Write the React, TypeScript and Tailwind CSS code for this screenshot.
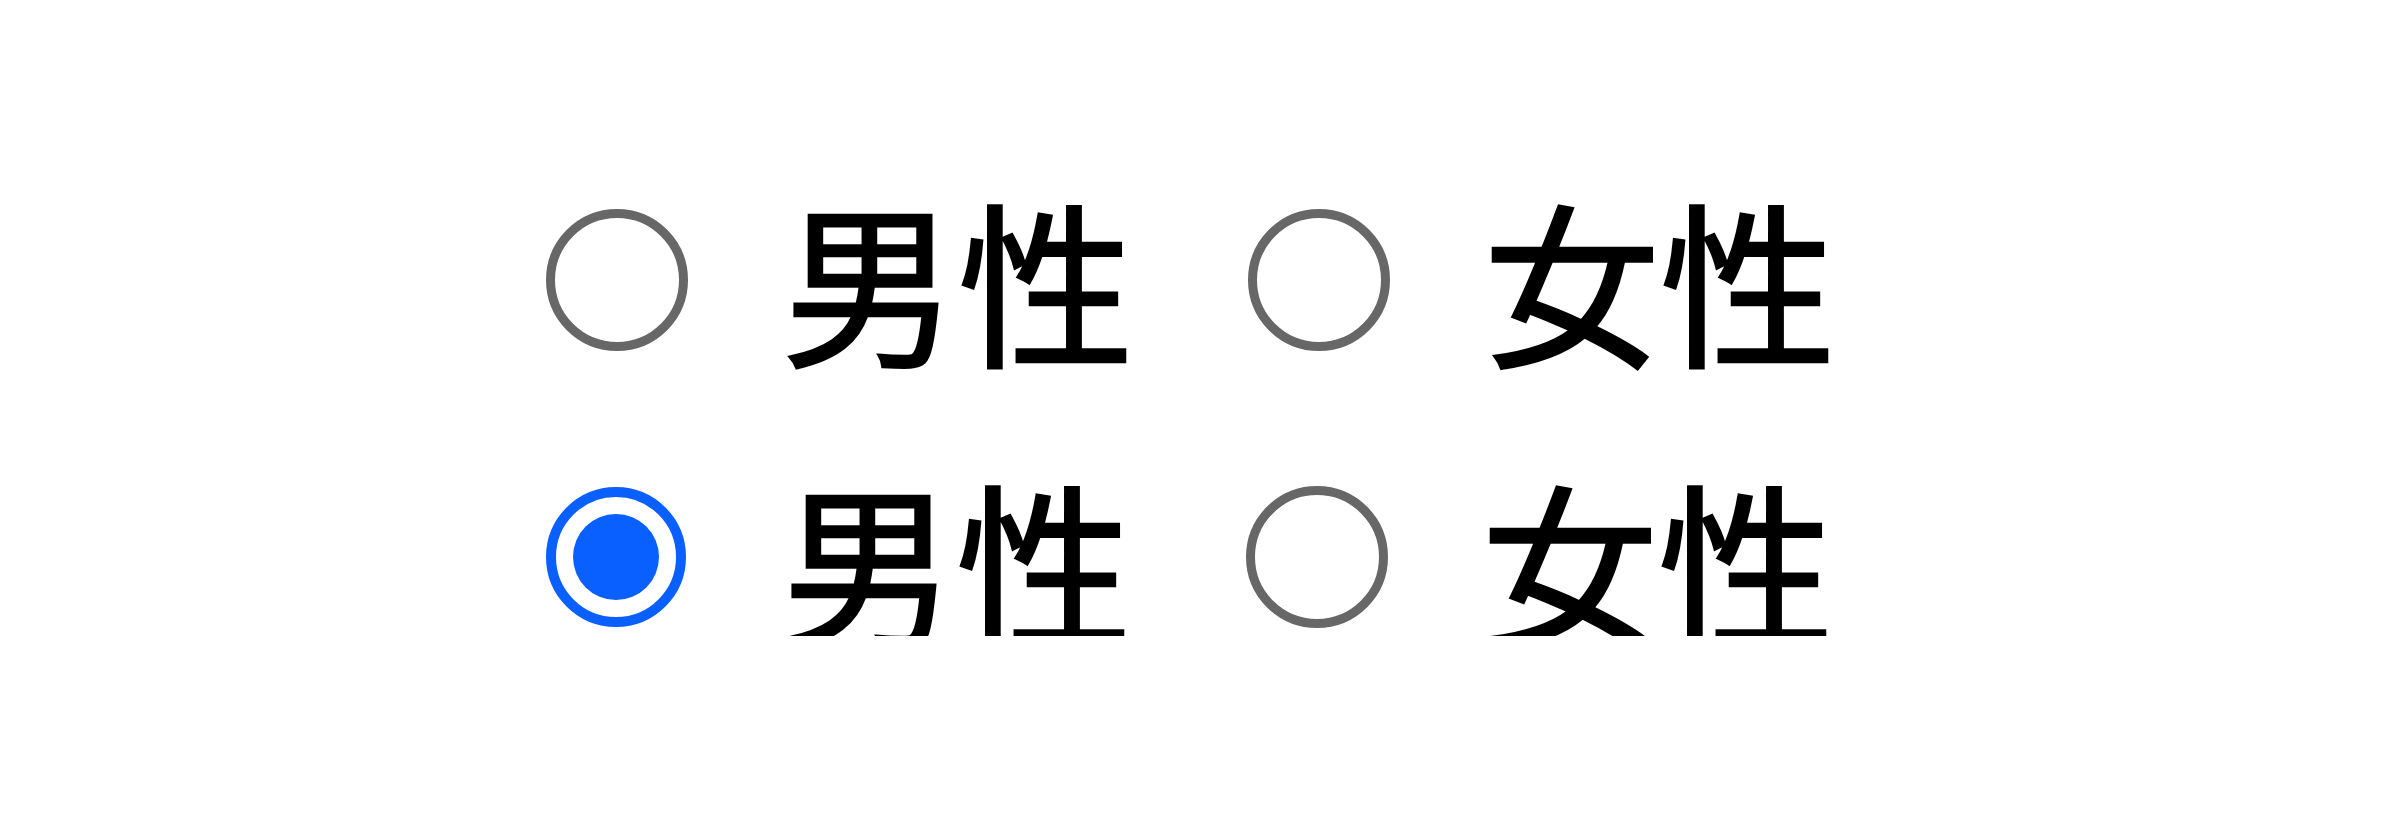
import { useState } from "react";

type Gender = "male" | "female";

const OPTIONS: { value: Gender; label: string }[] = [
  { value: "male", label: "男性" },
  { value: "female", label: "女性" },
];

const FONT = {
  fontFamily: '"Noto Sans CJK JP", "Noto Sans CJK SC", sans-serif',
};

function RadioDot({ checked }: { checked: boolean }) {
  if (checked) {
    return (
      <span className="flex h-[140px] w-[140px] shrink-0 items-center justify-center rounded-full border-[10px] border-[#0a5fff]">
        <span className="h-[86px] w-[86px] rounded-full bg-[#0a5fff]" />
      </span>
    );
  }
  return (
    <span className="h-[142px] w-[142px] shrink-0 rounded-full border-[9px] border-[#676767]" />
  );
}

const labelText =
  "block text-[176px] leading-none text-black [-webkit-text-stroke:2.5px_#000]";

/**
 * One row of the gender picker. `cropped` trims the label box so the
 * glyphs are cut top and bottom, as in the second sample row.
 */
function GenderRow({
  selected,
  cropped,
  onSelect,
}: {
  selected: Gender | null;
  cropped?: boolean;
  onSelect: (g: Gender) => void;
}) {
  return (
    <div className="flex items-center">
      {OPTIONS.map((opt, i) => (
        <label
          key={opt.value}
          className={
            i === 0
              ? "flex cursor-pointer items-center"
              : "ml-[114px] flex cursor-pointer items-center"
          }
          onClick={() => onSelect(opt.value)}
        >
          <RadioDot checked={selected === opt.value} />
          {cropped ? (
            <span className="ml-[94px] mt-[6px] block h-[152px] overflow-hidden">
              <span className={`${labelText} -mt-[13px]`} style={FONT}>
                {opt.label}
              </span>
            </span>
          ) : (
            <span className={`${labelText} ml-[94px] -mt-[4px]`} style={FONT}>
              {opt.label}
            </span>
          )}
        </label>
      ))}
    </div>
  );
}

export default function App() {
  const [first, setFirst] = useState<Gender | null>(null);
  const [second, setSecond] = useState<Gender | null>("male");

  return (
    <div className="flex h-[830px] w-full items-center justify-center bg-white pr-[18px]">
      <div className="flex flex-col gap-[112px]">
        <GenderRow selected={first} onSelect={setFirst} />
        <GenderRow selected={second} cropped onSelect={setSecond} />
      </div>
    </div>
  );
}
